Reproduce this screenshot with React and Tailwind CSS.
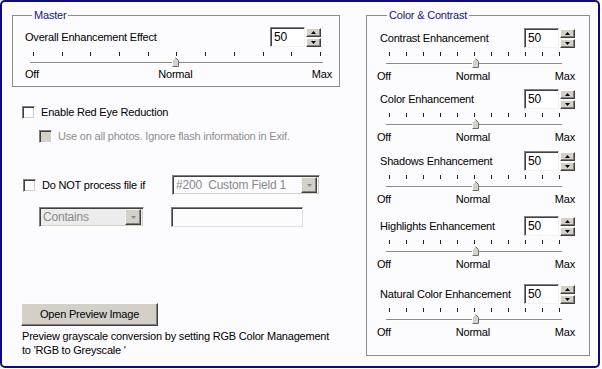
import React from 'react';

const ticks = Array.from({ length: 11 }, (_, i) => i);

function Arrow({ up, color = '#000' }) {
  return (
    <svg width="5" height="3" viewBox="0 0 5 3" className="block">
      <polygon points={up ? '2.5,0 5,3 0,3' : '0,0 5,0 2.5,3'} fill={color} />
    </svg>
  );
}

function Spinner() {
  return (
    <div className="flex items-start gap-[1px]">
      <div className="w-[35px] h-[20px] bg-white border border-t-[#808080] border-l-[#808080] border-r-[#f2f2f2] border-b-[#f2f2f2] shadow-[inset_1px_1px_0_#404040] pl-[3px] leading-[18px] text-[12px]">
        50
      </div>
      <div className="flex flex-col gap-[1px] mt-[1px]">
        <div className="w-[15px] h-[9px] bg-[#d4d0c8] border border-t-white border-l-white border-r-[#404040] border-b-[#404040] shadow-[inset_-1px_-1px_0_#808080] flex items-center justify-center">
          <Arrow up />
        </div>
        <div className="w-[15px] h-[9px] bg-[#d4d0c8] border border-t-white border-l-white border-r-[#404040] border-b-[#404040] shadow-[inset_-1px_-1px_0_#808080] flex items-center justify-center">
          <Arrow />
        </div>
      </div>
    </div>
  );
}

function Thumb() {
  return (
    <svg width="7" height="10" viewBox="0 0 7 10" className="block">
      <polygon points="0.5,3.5 3.5,0.5 6.5,3.5 6.5,9.5 0.5,9.5" fill="#d4d0c8" />
      <polyline points="0.5,9.5 0.5,3.5 3.5,0.5" fill="none" stroke="#ffffff" />
      <polyline points="3.5,0.5 6.5,3.5 6.5,9.5 0.5,9.5" fill="none" stroke="#6e6e6e" />
    </svg>
  );
}

function Slider({ width, tickLeft, tickWidth, trackLeft, trackWidth, thumbLeft, ticksTop, trackTop, labelsTop }) {
  return (
    <div style={{ width }}>
      <div className="flex justify-between h-[4px]" style={{ marginLeft: tickLeft, width: tickWidth, marginTop: ticksTop }}>
        {ticks.map((t) => (
          <span key={t} className="w-[1px] h-[4px] bg-[#202020]" />
        ))}
      </div>
      <div className="relative h-[2px] border-t border-t-[#8a8a8a] border-b border-b-white bg-[#b0b0b0]" style={{ marginLeft: trackLeft, width: trackWidth, marginTop: trackTop }}>
        <div className="absolute top-[-6px]" style={{ left: thumbLeft }}>
          <Thumb />
        </div>
      </div>
      <div className="flex justify-between leading-[13px]" style={{ marginTop: labelsTop }}>
        <span>Off</span>
        <span>Normal</span>
        <span>Max</span>
      </div>
    </div>
  );
}

function Checkbox({ disabled }) {
  return (
    <span
      className={
        'w-[13px] h-[13px] shrink-0 border border-t-[#808080] border-l-[#808080] border-r-white border-b-white shadow-[inset_1px_1px_0_#404040,inset_-1px_-1px_0_#d4d0c8] ' +
        (disabled ? 'bg-[#d4d0c8]' : 'bg-white')
      }
    />
  );
}

function Dropdown({ text, width, bg }) {
  return (
    <div
      className={'h-[20px] flex items-center border border-t-[#808080] border-l-[#808080] border-r-white border-b-white shadow-[inset_1px_1px_0_#404040,inset_-1px_-1px_0_#d4d0c8] pl-[3px] pr-[2px] ' + bg}
      style={{ width }}
    >
      <span className="flex-1 text-[#8a8a8a] leading-[14px] text-[12px] whitespace-pre">{text}</span>
      <div className="w-[16px] h-[16px] bg-[#d4d0c8] border border-t-[#f4f4f4] border-l-[#f4f4f4] border-r-[#404040] border-b-[#404040] shadow-[inset_-1px_-1px_0_#808080] flex items-center justify-center">
        <Arrow color="#8a8a8a" />
      </div>
    </div>
  );
}

const colorRows = [
  { label: 'Contrast Enhancement', mt: 'mt-[6px]' },
  { label: 'Color Enhancement', mt: 'mt-[6px]' },
  { label: 'Shadows Enhancement', mt: 'mt-[7px]' },
  { label: 'Highlights Enhancement', mt: 'mt-[10px]' },
  { label: 'Natural Color Enhancement', mt: 'mt-[13px]' },
];

export default function App() {
  return (
    <div className="w-[602px] h-[369px] bg-[#fcfbfe] font-['Liberation_Sans',Arial,sans-serif] text-[11px] tracking-[-0.2px] text-black">
      <div className="w-[600px] h-[368px] border-2 border-[#0c0c80] rounded-[5px] flex">
        {/* left column */}
        <div className="w-[364px] pl-[10px] pt-[7px]">
          <fieldset className="w-[328px] border border-[#8d8d8d] pl-[12px] pb-[5px]">
            <legend className="ml-[7px] px-[2px] leading-[13px] text-[#14148c]">Master</legend>
            <div className="w-[296px] mt-[5px] flex items-center justify-between">
              <span>Overall Enhancement Effect</span>
              <Spinner />
            </div>
            <Slider
              width={307}
              tickLeft={8}
              tickWidth={288}
              trackLeft={5}
              trackWidth={293}
              thumbLeft={142}
              ticksTop={5}
              trackTop={6}
              labelsTop={4}
            />
          </fieldset>

          <div className="ml-[10px] mt-[19px] flex items-center gap-[6px] leading-[13px]">
            <Checkbox />
            <span>Enable Red Eye Reduction</span>
          </div>
          <div className="ml-[27px] mt-[11px] flex items-center gap-[6px] leading-[13px] text-[#8e8e8e]">
            <Checkbox disabled />
            <span>Use on all photos. Ignore flash information in Exif.</span>
          </div>

          <div className="ml-[11px] mt-[32px] flex items-center">
            <Checkbox />
            <span className="ml-[6px] w-[130px]">Do NOT process file if</span>
            <Dropdown text="#200  Custom Field 1" width={148} bg="bg-[#fcfbfe]" />
          </div>
          <div className="ml-[27px] mt-[12px] flex items-center">
            <Dropdown text="Contains" width={105} bg="bg-[#ececec]" />
            <div className="ml-[27px] w-[132px] h-[20px] bg-[#fcfbfe] border border-t-[#808080] border-l-[#808080] border-r-[#e0e0e0] border-b-[#e0e0e0] shadow-[inset_1px_1px_0_#404040]" />
          </div>

          <button className="ml-[9px] mt-[76px] w-[137px] h-[23px] bg-[#d4d0c8] border border-t-white border-l-white border-r-[#404040] border-b-[#404040] shadow-[inset_-1px_-1px_0_#808080] text-[11px]">
            Open Preview Image
          </button>
          <p className="ml-[10px] mt-[3px] leading-[14px]">
            Preview grayscale conversion by setting RGB Color Management
            <br />
            to 'RGB to Greyscale '
          </p>
        </div>

        {/* right column */}
        <fieldset className="w-[224px] h-[347px] mt-[7px] border border-[#8d8d8d] pl-[13px]">
          <legend className="ml-[7px] px-[2px] leading-[13px] text-[#14148c]">Color &amp; Contrast</legend>
          {colorRows.map((r) => (
            <div key={r.label} className={r.mt}>
              <div className="w-[195px] flex items-center justify-between">
                <span>{r.label}</span>
                <Spinner />
              </div>
              <div className="ml-[-3px]">
                <Slider
                  width={198}
                  tickLeft={12}
                  tickWidth={171}
                  trackLeft={9}
                  trackWidth={176}
                  thumbLeft={86}
                  ticksTop={4}
                  trackTop={7}
                  labelsTop={5}
                />
              </div>
            </div>
          ))}
        </fieldset>
      </div>
    </div>
  );
}
